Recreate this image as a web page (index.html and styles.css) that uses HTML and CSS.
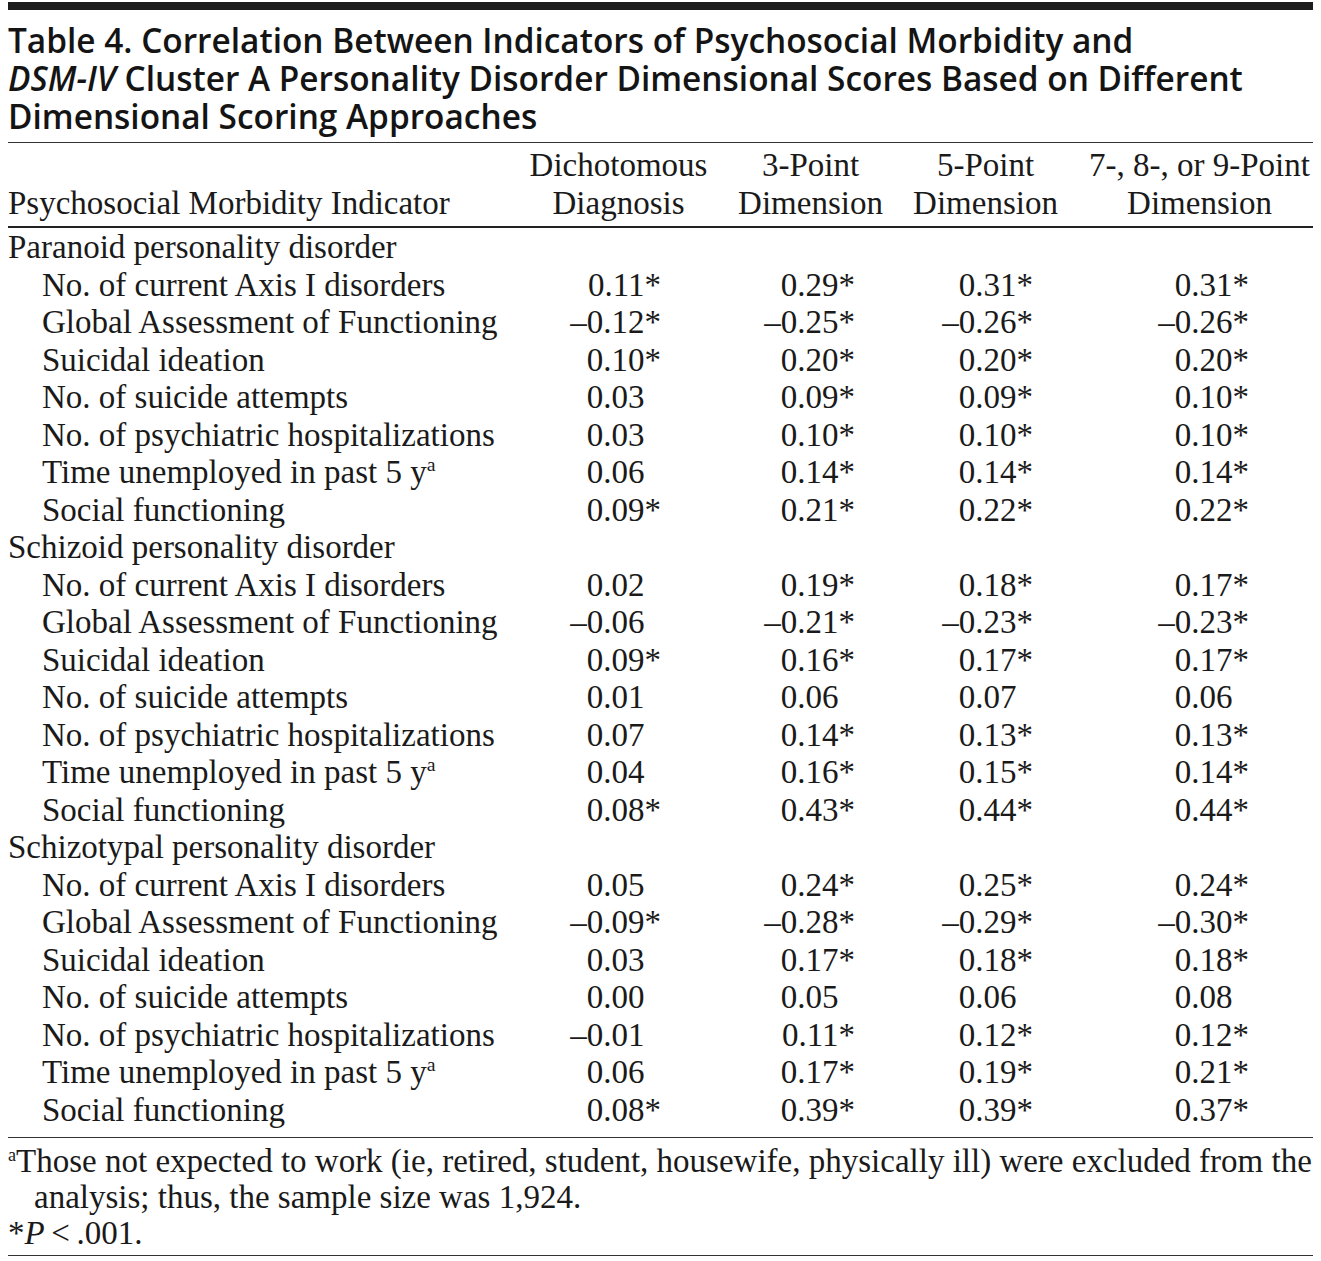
FILE: index.html
```html
<!DOCTYPE html>
<html lang="en">
<head>
<meta charset="utf-8">
<title>Table 4</title>
<link rel="stylesheet" href="styles.css">
</head>
<body>
<div class="page">
  <div class="topbar"></div>
  <h1 class="title"><span class="tl">Table 4. Correlation Between Indicators of Psychosocial Morbidity and</span><span class="tl"><em>DSM-IV</em> Cluster A Personality Disorder Dimensional Scores Based on Different</span><span class="tl">Dimensional Scoring Approaches</span></h1>
  <table class="data">
    <colgroup>
      <col class="c0"><col class="c1"><col class="c2"><col class="c3"><col class="c4">
    </colgroup>
    <thead>
      <tr>
        <th class="label">Psychosocial Morbidity Indicator</th>
        <th class="h1">Dichotomous<br>Diagnosis</th>
        <th class="h2">3-Point<br>Dimension</th>
        <th class="h3">5-Point<br>Dimension</th>
        <th class="h4">7-, 8-, or 9-Point<br>Dimension</th>
      </tr>
    </thead>
    <tbody>
      <tr class="group first"><td colspan="5">Paranoid personality disorder</td></tr>
      <tr><td class="item">No. of current Axis I disorders</td><td class="v1">0.11<i class="a">*</i></td><td class="v2">0.29<i class="a">*</i></td><td class="v3">0.31<i class="a">*</i></td><td class="v4">0.31<i class="a">*</i></td></tr>
      <tr><td class="item">Global Assessment of Functioning</td><td class="v1">–0.12<i class="a">*</i></td><td class="v2">–0.25<i class="a">*</i></td><td class="v3">–0.26<i class="a">*</i></td><td class="v4">–0.26<i class="a">*</i></td></tr>
      <tr><td class="item">Suicidal ideation</td><td class="v1">0.10<i class="a">*</i></td><td class="v2">0.20<i class="a">*</i></td><td class="v3">0.20<i class="a">*</i></td><td class="v4">0.20<i class="a">*</i></td></tr>
      <tr><td class="item">No. of suicide attempts</td><td class="v1">0.03<i class="a off">*</i></td><td class="v2">0.09<i class="a">*</i></td><td class="v3">0.09<i class="a">*</i></td><td class="v4">0.10<i class="a">*</i></td></tr>
      <tr><td class="item">No. of psychiatric hospitalizations</td><td class="v1">0.03<i class="a off">*</i></td><td class="v2">0.10<i class="a">*</i></td><td class="v3">0.10<i class="a">*</i></td><td class="v4">0.10<i class="a">*</i></td></tr>
      <tr><td class="item">Time unemployed in past 5 y<sup>a</sup></td><td class="v1">0.06<i class="a off">*</i></td><td class="v2">0.14<i class="a">*</i></td><td class="v3">0.14<i class="a">*</i></td><td class="v4">0.14<i class="a">*</i></td></tr>
      <tr><td class="item">Social functioning</td><td class="v1">0.09<i class="a">*</i></td><td class="v2">0.21<i class="a">*</i></td><td class="v3">0.22<i class="a">*</i></td><td class="v4">0.22<i class="a">*</i></td></tr>

      <tr class="group"><td colspan="5">Schizoid personality disorder</td></tr>
      <tr><td class="item">No. of current Axis I disorders</td><td class="v1">0.02<i class="a off">*</i></td><td class="v2">0.19<i class="a">*</i></td><td class="v3">0.18<i class="a">*</i></td><td class="v4">0.17<i class="a">*</i></td></tr>
      <tr><td class="item">Global Assessment of Functioning</td><td class="v1">–0.06<i class="a off">*</i></td><td class="v2">–0.21<i class="a">*</i></td><td class="v3">–0.23<i class="a">*</i></td><td class="v4">–0.23<i class="a">*</i></td></tr>
      <tr><td class="item">Suicidal ideation</td><td class="v1">0.09<i class="a">*</i></td><td class="v2">0.16<i class="a">*</i></td><td class="v3">0.17<i class="a">*</i></td><td class="v4">0.17<i class="a">*</i></td></tr>
      <tr><td class="item">No. of suicide attempts</td><td class="v1">0.01<i class="a off">*</i></td><td class="v2">0.06<i class="a off">*</i></td><td class="v3">0.07<i class="a off">*</i></td><td class="v4">0.06<i class="a off">*</i></td></tr>
      <tr><td class="item">No. of psychiatric hospitalizations</td><td class="v1">0.07<i class="a off">*</i></td><td class="v2">0.14<i class="a">*</i></td><td class="v3">0.13<i class="a">*</i></td><td class="v4">0.13<i class="a">*</i></td></tr>
      <tr><td class="item">Time unemployed in past 5 y<sup>a</sup></td><td class="v1">0.04<i class="a off">*</i></td><td class="v2">0.16<i class="a">*</i></td><td class="v3">0.15<i class="a">*</i></td><td class="v4">0.14<i class="a">*</i></td></tr>
      <tr><td class="item">Social functioning</td><td class="v1">0.08<i class="a">*</i></td><td class="v2">0.43<i class="a">*</i></td><td class="v3">0.44<i class="a">*</i></td><td class="v4">0.44<i class="a">*</i></td></tr>

      <tr class="group"><td colspan="5">Schizotypal personality disorder</td></tr>
      <tr><td class="item">No. of current Axis I disorders</td><td class="v1">0.05<i class="a off">*</i></td><td class="v2">0.24<i class="a">*</i></td><td class="v3">0.25<i class="a">*</i></td><td class="v4">0.24<i class="a">*</i></td></tr>
      <tr><td class="item">Global Assessment of Functioning</td><td class="v1">–0.09<i class="a">*</i></td><td class="v2">–0.28<i class="a">*</i></td><td class="v3">–0.29<i class="a">*</i></td><td class="v4">–0.30<i class="a">*</i></td></tr>
      <tr><td class="item">Suicidal ideation</td><td class="v1">0.03<i class="a off">*</i></td><td class="v2">0.17<i class="a">*</i></td><td class="v3">0.18<i class="a">*</i></td><td class="v4">0.18<i class="a">*</i></td></tr>
      <tr><td class="item">No. of suicide attempts</td><td class="v1">0.00<i class="a off">*</i></td><td class="v2">0.05<i class="a off">*</i></td><td class="v3">0.06<i class="a off">*</i></td><td class="v4">0.08<i class="a off">*</i></td></tr>
      <tr><td class="item">No. of psychiatric hospitalizations</td><td class="v1">–0.01<i class="a off">*</i></td><td class="v2">0.11<i class="a">*</i></td><td class="v3">0.12<i class="a">*</i></td><td class="v4">0.12<i class="a">*</i></td></tr>
      <tr><td class="item">Time unemployed in past 5 y<sup>a</sup></td><td class="v1">0.06<i class="a off">*</i></td><td class="v2">0.17<i class="a">*</i></td><td class="v3">0.19<i class="a">*</i></td><td class="v4">0.21<i class="a">*</i></td></tr>
      <tr class="last"><td class="item">Social functioning</td><td class="v1">0.08<i class="a">*</i></td><td class="v2">0.39<i class="a">*</i></td><td class="v3">0.39<i class="a">*</i></td><td class="v4">0.37<i class="a">*</i></td></tr>
    </tbody>
  </table>
  <div class="notes">
    <p class="note"><sup>a</sup>Those not expected to work (ie, retired, student, housewife, physically ill) were excluded from the<br>analysis; thus, the sample size was 1,924.</p>
    <p class="note sig">*<em>P</em>&thinsp;&lt;&thinsp;.001.</p>
  </div>
</div>
</body>
</html>
```

FILE: styles.css
```css
html, body {
  margin: 0;
  padding: 0;
  background: #ffffff;
}

.page {
  width: 1305px;
  padding: 2px 0 0 8px;
  color: #1a1a1a;
}

.topbar {
  height: 8px;
  background: #1c1c1c;
}

.title {
  margin: 11px 0 0 0;
  font-family: "Open Sans", "Liberation Sans", sans-serif;
  font-weight: 600;
  font-size: 33.4px;
  line-height: 38px;
  letter-spacing: 0;
  color: #141414;
}

.title .tl {
  display: block;
  height: 38px;
  white-space: nowrap;
}

.title em {
  font-style: italic;
}

.data {
  width: 1305px;
  margin-top: 7px;
  border-collapse: collapse;
  table-layout: fixed;
  font-family: "Liberation Serif", "Times New Roman", serif;
  font-size: 33px;
  line-height: 37.5px;
  color: #1a1a1a;
  border-top: 1.5px solid #333;
  border-bottom: 1.5px solid #333;
}

.c0 { width: 514px; }
.c1 { width: 200px; }
.c2 { width: 180px; }
.c3 { width: 180px; }
.c4 { width: 231px; }

.data th {
  font-weight: normal;
  padding: 4px 0 4px 0;
  text-align: center;
  vertical-align: bottom;
  border-bottom: 2px solid #222;
}

.data th.label {
  text-align: left;
}

.data th.h1 { padding-right: 7px; }
.data th.h2 { padding-right: 3px; }
.data th.h3 { padding-right: 13px; }
.data th.h4 { padding-left: 4px; }

.data td {
  padding: 0;
  white-space: nowrap;
}

.group td {
  text-align: left;
}

.group.first td {
  padding-top: 1px;
}

.last td {
  padding-bottom: 8px;
}

.data td.item {
  padding-left: 34px;
}

.data td.v1, .data td.v2, .data td.v3, .data td.v4 {
  text-align: right;
}

.data td.v1 { padding-right: 61px; }
.data td.v2 { padding-right: 47px; }
.data td.v3 { padding-right: 49px; }
.data td.v4 { padding-right: 64px; }

.a {
  font-style: normal;
}

.a.off {
  visibility: hidden;
}

sup {
  font-size: 60%;
  line-height: 0;
  vertical-align: 0.6em;
}

.notes {
  padding: 5px 0 4px 0;
  border-bottom: 1.5px solid #333;
  font-family: "Liberation Serif", "Times New Roman", serif;
  font-size: 33px;
  line-height: 36px;
  color: #1a1a1a;
}

.note {
  margin: 0;
  padding-left: 26px;
  text-indent: -26px;
  white-space: nowrap;
}

.note sup {
  font-size: 55%;
}

.note.sig {
  padding-left: 0;
  text-indent: 0;
}
```
